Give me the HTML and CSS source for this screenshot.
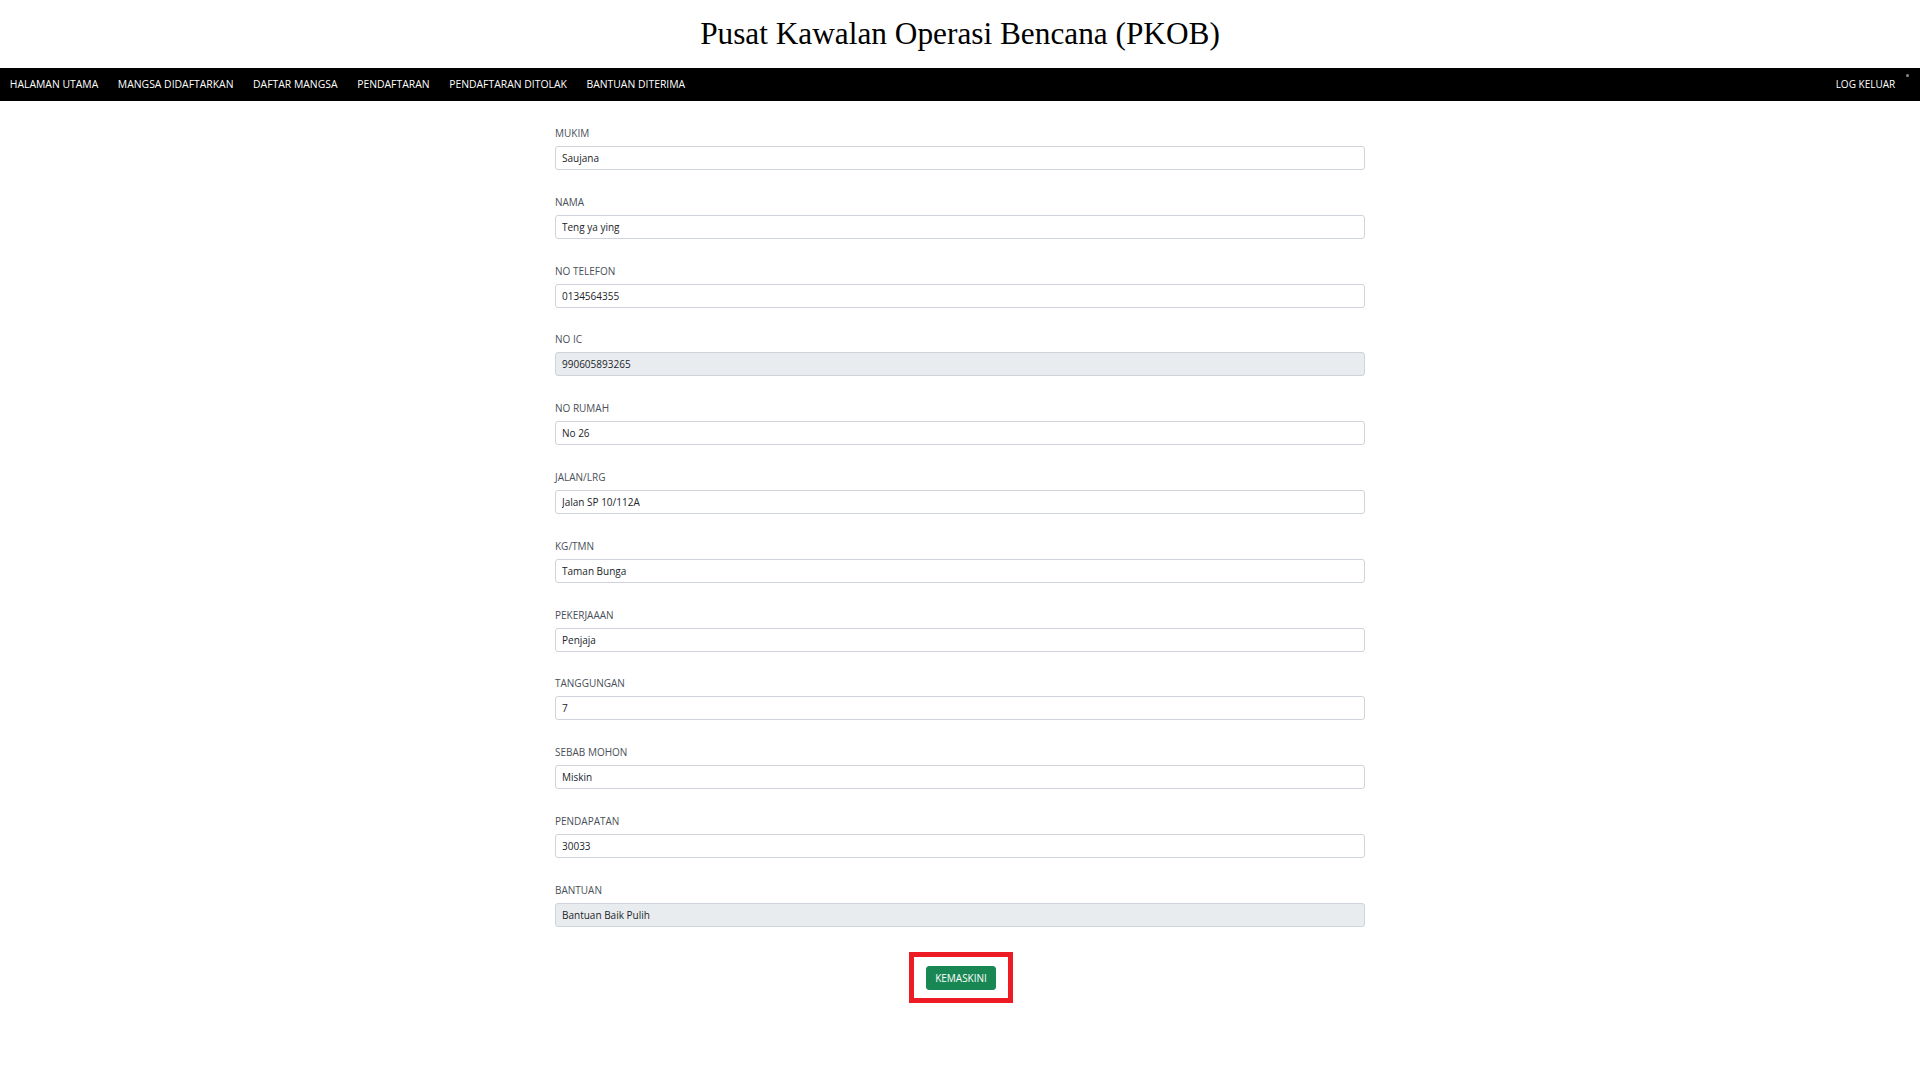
FILE: index.html
```html
<!DOCTYPE html>
<html lang="ms">
<head>
<meta charset="utf-8">
<title>PKOB</title>
<link rel="stylesheet" href="styles.css">
</head>
<body>
<h1 class="title">Pusat Kawalan Operasi Bencana (PKOB)</h1>
<nav class="topnav">
  <ul class="nav-left">
    <li><a href="#">HALAMAN UTAMA</a></li>
    <li><a href="#">MANGSA DIDAFTARKAN</a></li>
    <li><a href="#">DAFTAR MANGSA</a></li>
    <li><a href="#">PENDAFTARAN</a></li>
    <li><a href="#">PENDAFTARAN DITOLAK</a></li>
    <li><a href="#">BANTUAN DITERIMA</a></li>
  </ul>
  <div class="nav-right">
    <a href="#">LOG KELUAR</a>
    <span class="nav-dot"></span>
  </div>
</nav>
<main class="form-wrap">
  <div class="group"><label>MUKIM</label><input class="field" value="Saujana"></div>
  <div class="group"><label>NAMA</label><input class="field" value="Teng ya ying"></div>
  <div class="group"><label>NO TELEFON</label><input class="field" value="0134564355"></div>
  <div class="group"><label>NO IC</label><input class="field" value="990605893265" disabled></div>
  <div class="group"><label>NO RUMAH</label><input class="field" value="No 26"></div>
  <div class="group"><label>JALAN/LRG</label><input class="field" value="Jalan SP 10/112A"></div>
  <div class="group"><label>KG/TMN</label><input class="field" value="Taman Bunga"></div>
  <div class="group"><label>PEKERJAAAN</label><input class="field" value="Penjaja"></div>
  <div class="group"><label>TANGGUNGAN</label><input class="field" value="7"></div>
  <div class="group"><label>SEBAB MOHON</label><input class="field" value="Miskin"></div>
  <div class="group"><label>PENDAPATAN</label><input class="field" value="30033"></div>
  <div class="group"><label>BANTUAN</label><input class="field" value="Bantuan Baik Pulih" disabled></div>
  <div class="actions">
    <div class="highlight"><button class="btn-success" type="button">KEMASKINI</button></div>
  </div>
</main>
</body>
</html>
```
FILE: styles.css
```css
html, body {
  margin: 0;
  padding: 0;
  background: #fff;
}
body {
  font-family: "Open Sans", "Noto Sans", sans-serif;
  color: #212529;
}
.title {
  font-family: "Liberation Serif", "Times New Roman", serif;
  font-weight: normal;
  font-size: 31.3px;
  line-height: 37px;
  text-align: center;
  margin: 15px 0 16px;
  color: #000;
}
.topnav {
  height: 33px;
  background: #000;
  display: flex;
  align-items: center;
  justify-content: space-between;
  padding: 0 15px 0 0;
}
.nav-left {
  list-style: none;
  margin: 0;
  padding: 0;
  display: flex;
}
.topnav a {
  display: block;
  color: #fff;
  text-decoration: none;
  font-size: 10.4px;
  line-height: 15px;
  padding: 0 9.8px;
}
.nav-right a {
  font-size: 10px;
}
.nav-right {
  display: flex;
  align-items: center;
  position: relative;
}
.nav-dot {
  position: absolute;
  right: -4px;
  top: -3px;
  width: 3px;
  height: 3px;
  border-radius: 50%;
  background: #8a8a8a;
}
.form-wrap {
  width: 810px;
  margin: 25px auto 0;
}
.group {
  display: flex;
  flex-direction: column;
  margin-bottom: 24.8px;
}
.group label {
  font-size: 10px;
  line-height: 15px;
  color: #495057;
  margin-bottom: 5px;
}
.field {
  box-sizing: border-box;
  width: 100%;
  height: 24px;
  border: 1px solid #ced4da;
  border-radius: 3px;
  padding: 0 6px;
  font-family: "Open Sans", "Noto Sans", sans-serif;
  font-size: 10px;
  color: #212529;
  background: #fff;
  margin: 0;
}
.field:disabled {
  background: #e9ecef;
  color: #212529;
  opacity: 1;
}
.actions {
  display: flex;
  justify-content: center;
  padding-left: 2px;
}
.highlight {
  border: 5px solid #ed1c24;
  padding: 9px 12px 8px 12px;
  display: flex;
}
.btn-success {
  height: 24px;
  padding: 0 8px;
  background: #198754;
  border: 1px solid #198754;
  border-radius: 3px;
  color: #fff;
  font-family: "Open Sans", "Noto Sans", sans-serif;
  font-size: 10px;
  line-height: 22px;
}
```
